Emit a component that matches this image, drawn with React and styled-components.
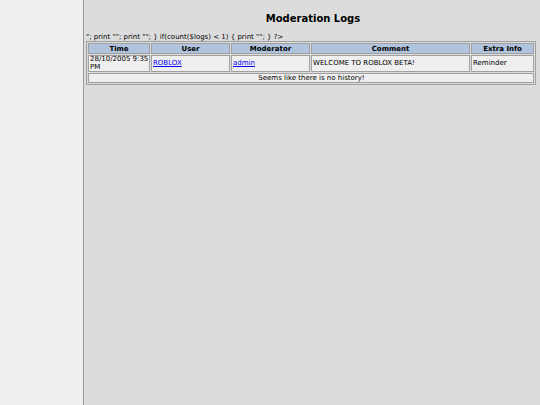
import React from "react";
import styled, { createGlobalStyle } from "styled-components";

const Global = createGlobalStyle`
  html, body { margin: 0; padding: 0; }
  body { background: #dcdcdc; font-family: "DejaVu Sans", Verdana, sans-serif; }
`;

const Page = styled.div`
  display: flex;
  height: 405px;
  width: 540px;
  overflow: hidden;
`;

const Sidebar = styled.div`
  width: 83px;
  flex: none;
  background: #efefef;
  border-right: 1px solid #999;
`;

const Main = styled.div`
  flex: 1;
  padding: 12px 4px 0 2px;
  background: #dcdcdc;
`;

const Title = styled.h1`
  margin: 0 0 7px 4px;
  text-align: center;
  font-size: 10px;
  line-height: 14px;
  font-weight: bold;
  color: #000;
`;

const Raw = styled.div`
  font-size: 7px;
  line-height: 8px;
  color: #000;
  white-space: pre;
`;

const Table = styled.table`
  width: 100%;
  border-collapse: separate;
  border-spacing: 1px;
  border: 1px solid #a0a0a0;
  font-size: 7px;
`;

const Th = styled.th`
  background: #b0c4de;
  border: 1px solid #a0a0a0;
  padding: 0 1px;
  height: 9px;
  line-height: 8px;
  font-weight: bold;
  color: #000;
  width: ${(p) => p.$w || "auto"};
`;

const Td = styled.td`
  background: #efefef;
  border: 1px solid #a0a0a0;
  padding: 0 0 0 1px;
  line-height: 7.5px;
  height: 15px;
  color: #000;
  text-align: ${(p) => (p.$center ? "center" : "left")};
  ${(p) => p.$short && "height: 8px; line-height: 8px;"}
`;

const Link = styled.a`
  color: #0000ee;
  text-decoration: underline;
`;

export default function App() {
  return (
    <>
      <Global />
      <Page>
        <Sidebar />
        <Main>
          <Title>Moderation Logs</Title>
          <Raw>{'"; print ""; print ""; } if(count($logs) < 1) { print ""; } ?>'}</Raw>
          <Table>
            <thead>
              <tr>
                <Th $w="58px">Time</Th>
                <Th $w="75px">User</Th>
                <Th $w="75px">Moderator</Th>
                <Th>Comment</Th>
                <Th $w="59px">Extra Info</Th>
              </tr>
            </thead>
            <tbody>
              <tr>
                <Td>28/10/2005 9:35 PM</Td>
                <Td><Link href="#">ROBLOX</Link></Td>
                <Td><Link href="#">admin</Link></Td>
                <Td>WELCOME TO ROBLOX BETA!</Td>
                <Td>Reminder</Td>
              </tr>
              <tr>
                <Td colSpan={5} $center $short>Seems like there is no history!</Td>
              </tr>
            </tbody>
          </Table>
        </Main>
      </Page>
    </>
  );
}
